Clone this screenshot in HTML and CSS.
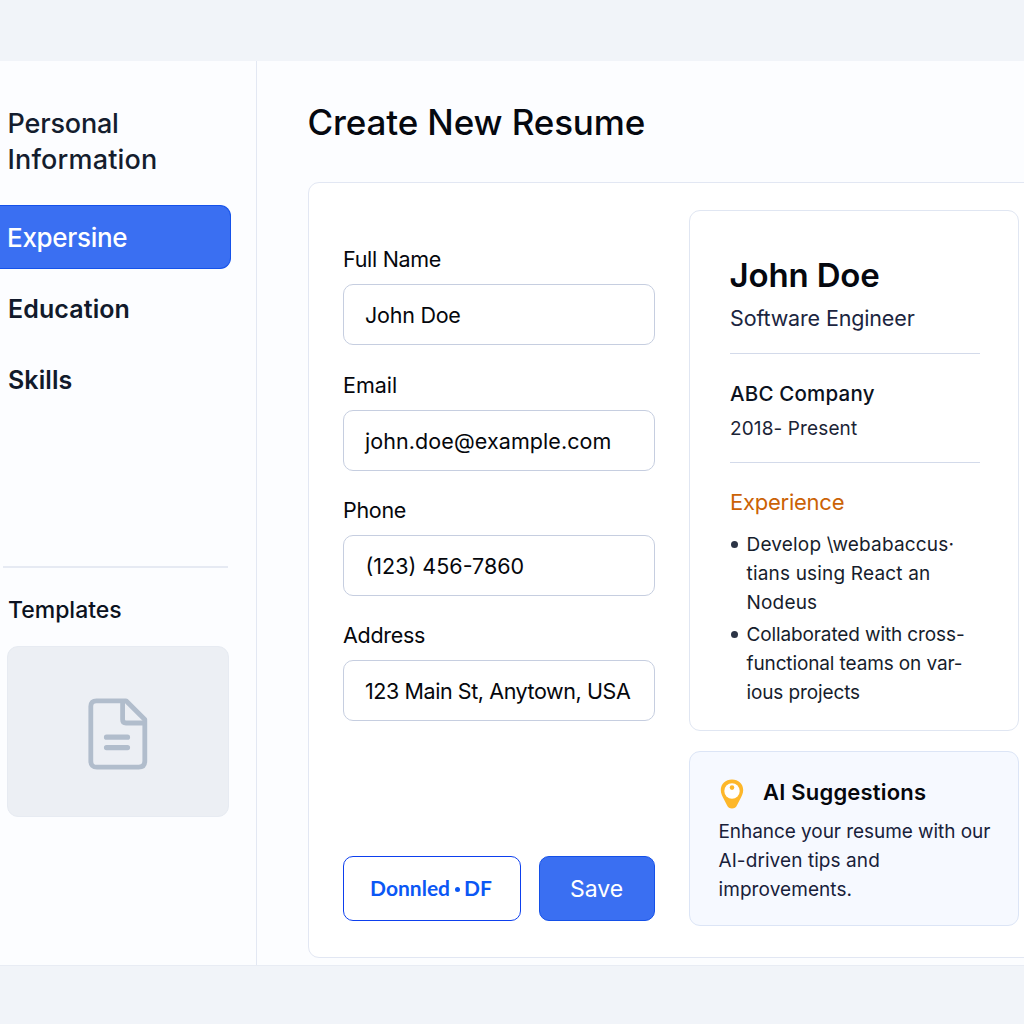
FILE: index.html
```html
<!DOCTYPE html>
<html lang="en">
<head>
<meta charset="utf-8">
<title>Create New Resume</title>
<link rel="stylesheet" href="styles.css">
</head>
<body>
<div class="app">
  <aside class="sidebar">
    <nav class="nav">
      <a class="nav-item nav-personal"><span class="p1">Personal</span><br><span class="p2">Information</span></a>
      <a class="nav-item active"><span>Expersine</span></a>
      <a class="nav-item strong"><span>Education</span></a>
      <a class="nav-item strong skills"><span>Skills</span></a>
    </nav>
    <hr class="side-rule">
    <h2 class="side-title"><span>Templates</span></h2>
    <div class="template">
      <svg width="60" height="72" viewBox="0 0 60 72" fill="none" stroke="#b1bdcc" stroke-width="4.8" stroke-linejoin="round" stroke-linecap="round">
        <path d="M8.5 2.8H38L56.8 21.5V63Q56.8 69.2 50.6 69.2H9Q2.8 69.2 2.8 63V8.5Q2.8 2.8 8.5 2.8Z"/>
        <path d="M34.6 3.5V21.5Q34.6 25 38 25H56"/>
        <path d="M18.5 39.2H39.5M18.5 49.6H39.5" stroke-width="5.2"/>
      </svg>
    </div>
  </aside>
  <main class="main">
    <h1 class="title"><span>Create New Resume</span></h1>
    <section class="card">
      <form class="form">
        <label class="field"><span class="label tight">Full Name</span><span class="input i1"><span>John Doe</span></span></label>
        <label class="field"><span class="label">Email</span><span class="input i2"><span>john.doe@example.com</span></span></label>
        <label class="field"><span class="label tight">Phone</span><span class="input i3"><span>(123) 456-7860</span></span></label>
        <label class="field"><span class="label tight">Address</span><span class="input i4"><span>123 Main St, Anytown, USA</span></span></label>
        <div class="actions">
          <button type="button" class="btn outline">Donnled<i class="dot"></i>DF</button>
          <button type="button" class="btn primary">Save</button>
        </div>
      </form>
      <div class="side">
        <article class="preview">
          <h2 class="name">John Doe</h2>
          <p class="role">Software Engineer</p>
          <hr class="rule">
          <p class="company">ABC Company</p>
          <p class="dates">2018- Present</p>
          <hr class="rule">
          <h3 class="section">Experience</h3>
          <ul class="list">
            <li class="first">Develop \webabaccus·<br>tians using React an<br>Nodeus</li>
            <li class="second">Collaborated with cross-<br>functional teams on var-<br>ious projects</li>
          </ul>
        </article>
        <article class="tips">
          <h3 class="tips-title">
            <svg width="24" height="30" viewBox="0 0 24 30">
              <path d="M12 .5C18.4.5 23.2 5 23.2 11.1C23.2 14.5 21.7 17.3 20.1 20.2L17 26.2Q15.5 29.5 12 29.5Q8.5 29.5 7 26.2L3.9 20.2C2.3 17.3.8 14.5.8 11.1C.8 5 5.6.5 12 .5Z" fill="#fdb72a"/>
              <circle cx="12" cy="12" r="7.7" fill="#fff"/>
              <circle cx="12" cy="8.6" r="2.3" fill="#fdb72a"/>
            </svg>
            <span>AI Suggestions</span>
          </h3>
          <p class="tips-text">Enhance your resume with our<br><span class="wide">AI-driven tips and<br>improvements.</span></p>
        </article>
      </div>
    </section>
  </main>
</div>
</body>
</html>
```
FILE: styles.css
```css
* { box-sizing: border-box; }
body {
  margin: 0;
  width: 1024px;
  height: 1024px;
  padding-top: 61px;
  overflow: hidden;
  background: #f1f4f9;
  color: #0b1220;
  font-family: Inter, "Liberation Sans", sans-serif;
}
h1, h2, h3, p, ul { margin: 0; padding: 0; font-weight: 400; }
hr { margin: 0; border: 0; }
.app {
  display: flex;
  height: 905px;
  background: #fcfdff;
  border-bottom: 1px solid #e8ecf4;
}
.sidebar {
  flex: none;
  width: 257px;
  border-right: 1px solid #e3e8f3;
}
.nav { display: flex; flex-direction: column; padding-top: 45px; }
.nav-item {
  display: flex;
  align-items: center;
  width: 231px;
  height: 64px;
  padding-left: 8px;
  margin-bottom: 8px;
  color: #141d2e;
  font-size: 26px;
  font-weight: 500;
}
.nav-personal {
  display: block;
  height: 72px;
  margin-bottom: 27px;
  padding-left: 7.5px;
  font-size: 27px;
  line-height: 36px;
}
.p1 { letter-spacing: -0.18px; }
.p2 { letter-spacing: 0.16px; }
.active {
  padding-left: 7px;
  background: #3a6ff2;
  border: 1px solid #1552ea;
  border-left: 0;
  border-radius: 0 11px 11px 0;
  color: #fff;
  font-weight: 450;
  letter-spacing: -0.3px;
}
.strong { margin-bottom: 7px; color: #111a2b; font-size: 25px; font-weight: 570; letter-spacing: 0.1px; }
.side-rule { width: 225px; height: 2px; margin: 147px 0 0 3px; background: #e6eaf3; }
.side-title {
  padding: 24px 0 0 8px;
  font-size: 23px;
  font-weight: 470;
  line-height: 36px;
}
.template {
  display: flex;
  align-items: center;
  justify-content: center;
  width: 222px;
  height: 171px;
  margin: 18px 0 0 7.4px;
  padding-top: 4px;
  background: #eceff4;
  border: 1px solid #e7ebf2;
  border-radius: 11px;
}
.main { flex: 1; min-width: 0; padding-left: 51px; }
.title {
  height: 121px;
  margin-left: -0.5px;
  color: #05080f;
  font-size: 35px;
  font-weight: 530;
  line-height: 122px;
  letter-spacing: -0.13px;
  white-space: nowrap;
}
.card {
  display: flex;
  width: 740px;
  height: 776px;
  padding: 27px 0 0 34px;
  background: #fff;
  border: 1px solid #e2e7f3;
  border-radius: 11px;
}
.form { flex: none; width: 312px; padding-top: 25.2px; }
.field { display: block; height: 125.4px; color: #05070c; font-size: 21.5px; white-space: nowrap; }
.label { display: block; height: 49px; line-height: 49px; }
.tight { letter-spacing: -0.3px; }
.input {
  display: flex;
  align-items: center;
  height: 61px;
  padding-left: 21px;
  border: 1px solid #c6cee0;
  border-radius: 10px;
}
.i1 { letter-spacing: -0.25px; }
.i2 { padding-top: 1px; letter-spacing: 0.08px; }
.i3 { padding: 1px 0 0 21.5px; }
.i4 { letter-spacing: -0.42px; }
.actions { display: flex; gap: 18px; margin-top: 119px; }
.btn {
  height: 65px;
  padding: 0;
  border-radius: 10px;
  font-family: Inter, sans-serif;
  font-size: 23px;
}
.outline {
  display: flex;
  align-items: center;
  justify-content: center;
  width: 178px;
  padding: 0 2px 1px 0;
  border: 1.5px solid #0d3fee;
  background: #fff;
  color: #0b57f5;
  font-family: Lato, sans-serif;
  font-size: 21px;
  font-weight: 700;
}
.dot { width: 5px; height: 5px; margin: 4px 4px 0 5px; border-radius: 50%; background: #0b57f5; }
.primary { width: 116px; padding: 1px 1px 0 0; border: 1px solid #1450e8; background: #3a6ff2; color: #fff; }
.side { flex: none; width: 330px; margin-left: 34px; }
.preview {
  height: 521px;
  padding: 42px 38px 0 40px;
  border: 1px solid #e0e6f2;
  border-radius: 11px;
  white-space: nowrap;
}
.name { margin-left: -0.5px; color: #05080f; font-size: 33px; font-weight: 600; line-height: 44px; letter-spacing: -0.15px; }
.role { height: 56px; color: #1b2540; font-size: 21.5px; line-height: 43px; letter-spacing: -0.15px; }
.rule { width: 250px; height: 1px; background: #d3daea; }
.company { padding-top: 22px; font-size: 20.5px; font-weight: 500; line-height: 35px; letter-spacing: 0.2px; }
.dates { height: 51px; color: #1b2436; font-size: 19px; line-height: 35px; letter-spacing: 0.12px; }
.section { padding-top: 21px; color: #cb6205; font-size: 22px; line-height: 36px; letter-spacing: -0.25px; }
.list {
  padding: 10px 0 0 16.5px;
  list-style: none;
  color: #161d2c;
  font-size: 19px;
  line-height: 29px;
}
.list li { margin-bottom: 3px; position: relative; }
.first { letter-spacing: 0.18px; }
.second { letter-spacing: -0.12px; }
.list li::before {
  content: "";
  position: absolute;
  left: -16px;
  top: 11px;
  width: 7px;
  height: 7px;
  border-radius: 50%;
  background: #2b3445;
}
.tips {
  height: 175px;
  margin-top: 20px;
  padding: 24px 0 0 28px;
  background: #f6f9ff;
  border: 1px solid #dce5f6;
  border-radius: 11px;
  white-space: nowrap;
}
.tips-title {
  display: flex;
  align-items: center;
  height: 34px;
  padding-left: 2px;
  gap: 19px;
  color: #05070c;
  font-size: 22px;
  font-weight: 590;
  line-height: 30px;
  letter-spacing: 0.2px;
}
.tips-title svg { margin-top: 2.5px; }
.tips-title span { margin-top: -3px; }
.tips-text { margin: 7px 0 0 0.5px; color: #18213a; font-size: 19px; line-height: 29px; letter-spacing: -0.06px; }
.wide { letter-spacing: 0.08px; }
```
